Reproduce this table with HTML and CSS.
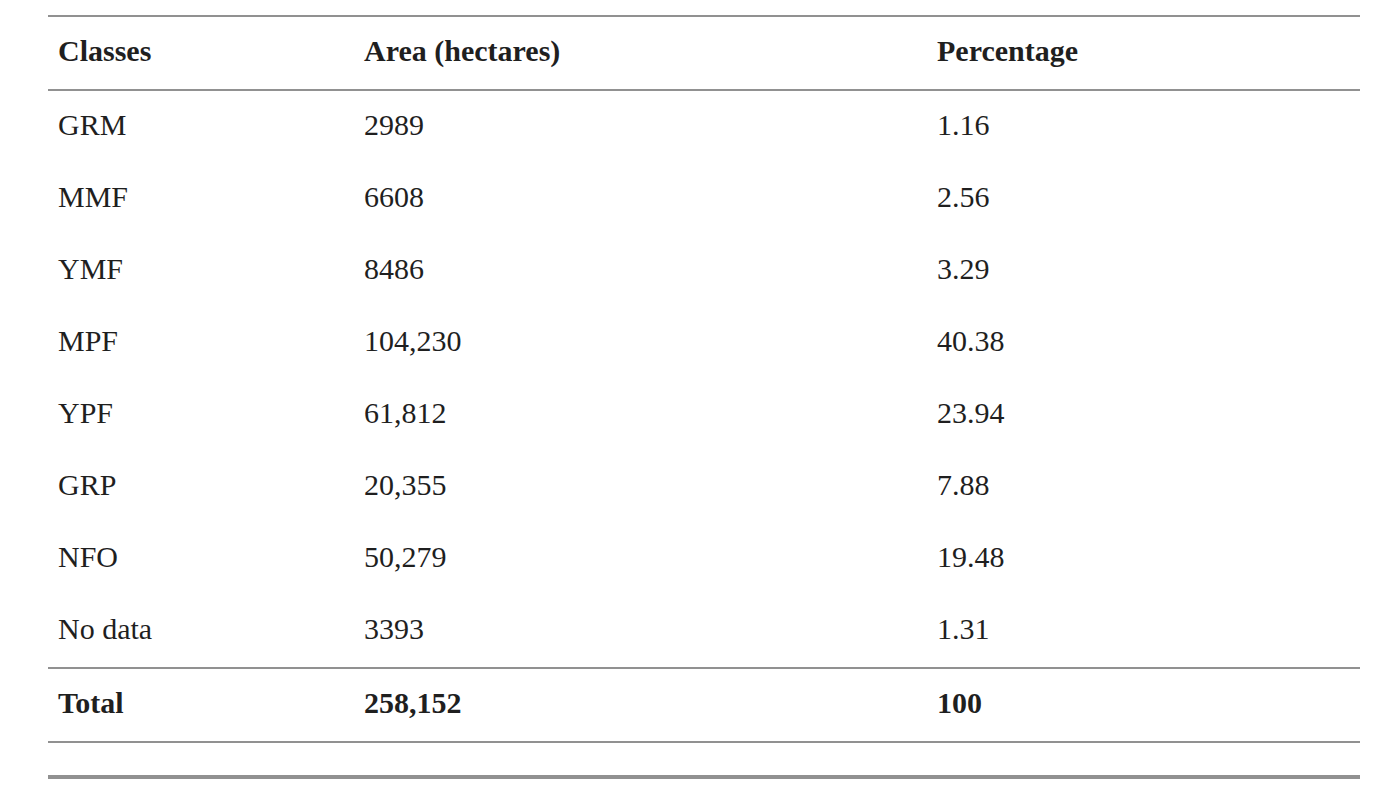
FILE: index.html
```html
<!DOCTYPE html>
<html lang="en">
<head>
<meta charset="utf-8">
<title>Classes area table</title>
<link rel="stylesheet" href="styles.css">
</head>
<body>
<div class="wrap">
  <table class="data">
    <thead>
      <tr><th class="c1">Classes</th><th class="c2">Area (hectares)</th><th class="c3">Percentage</th></tr>
    </thead>
    <tbody>
      <tr><td>GRM</td><td>2989</td><td>1.16</td></tr>
      <tr><td>MMF</td><td>6608</td><td>2.56</td></tr>
      <tr><td>YMF</td><td>8486</td><td>3.29</td></tr>
      <tr><td>MPF</td><td>104,230</td><td>40.38</td></tr>
      <tr><td>YPF</td><td>61,812</td><td>23.94</td></tr>
      <tr><td>GRP</td><td>20,355</td><td>7.88</td></tr>
      <tr><td>NFO</td><td>50,279</td><td>19.48</td></tr>
      <tr class="last"><td>No data</td><td>3393</td><td>1.31</td></tr>
      <tr class="total"><td>Total</td><td>258,152</td><td>100</td></tr>
    </tbody>
  </table>
  <div class="foot-rule"></div>
</div>
</body>
</html>
```
FILE: styles.css
```css
html, body {
  margin: 0;
  padding: 0;
  background: #ffffff;
}
.wrap {
  padding: 15px 30px 0 48px;
  font-family: "Liberation Serif", "DejaVu Serif", serif;
  color: #1f1f1f;
}
.data {
  width: 1312px;
  border-collapse: collapse;
  border-top: 2px solid #919191;
  font-size: 30px;
}
.data th, .data td {
  text-align: left;
  padding: 0 10px 4px 10px;
  height: 68px;
  vertical-align: middle;
  font-weight: normal;
}
.data th {
  font-weight: bold;
  border-bottom: 2px solid #919191;
}
.c1 { width: 286px; }
.c2 { width: 553px; }
.c3 { width: auto; }
.data tr.last td {
  border-bottom: 2px solid #919191;
}
.data tr.total td {
  font-weight: bold;
  border-bottom: 2px solid #919191;
}
.foot-rule {
  width: 1312px;
  height: 4px;
  margin-top: 32px;
  background: #919191;
}
```
